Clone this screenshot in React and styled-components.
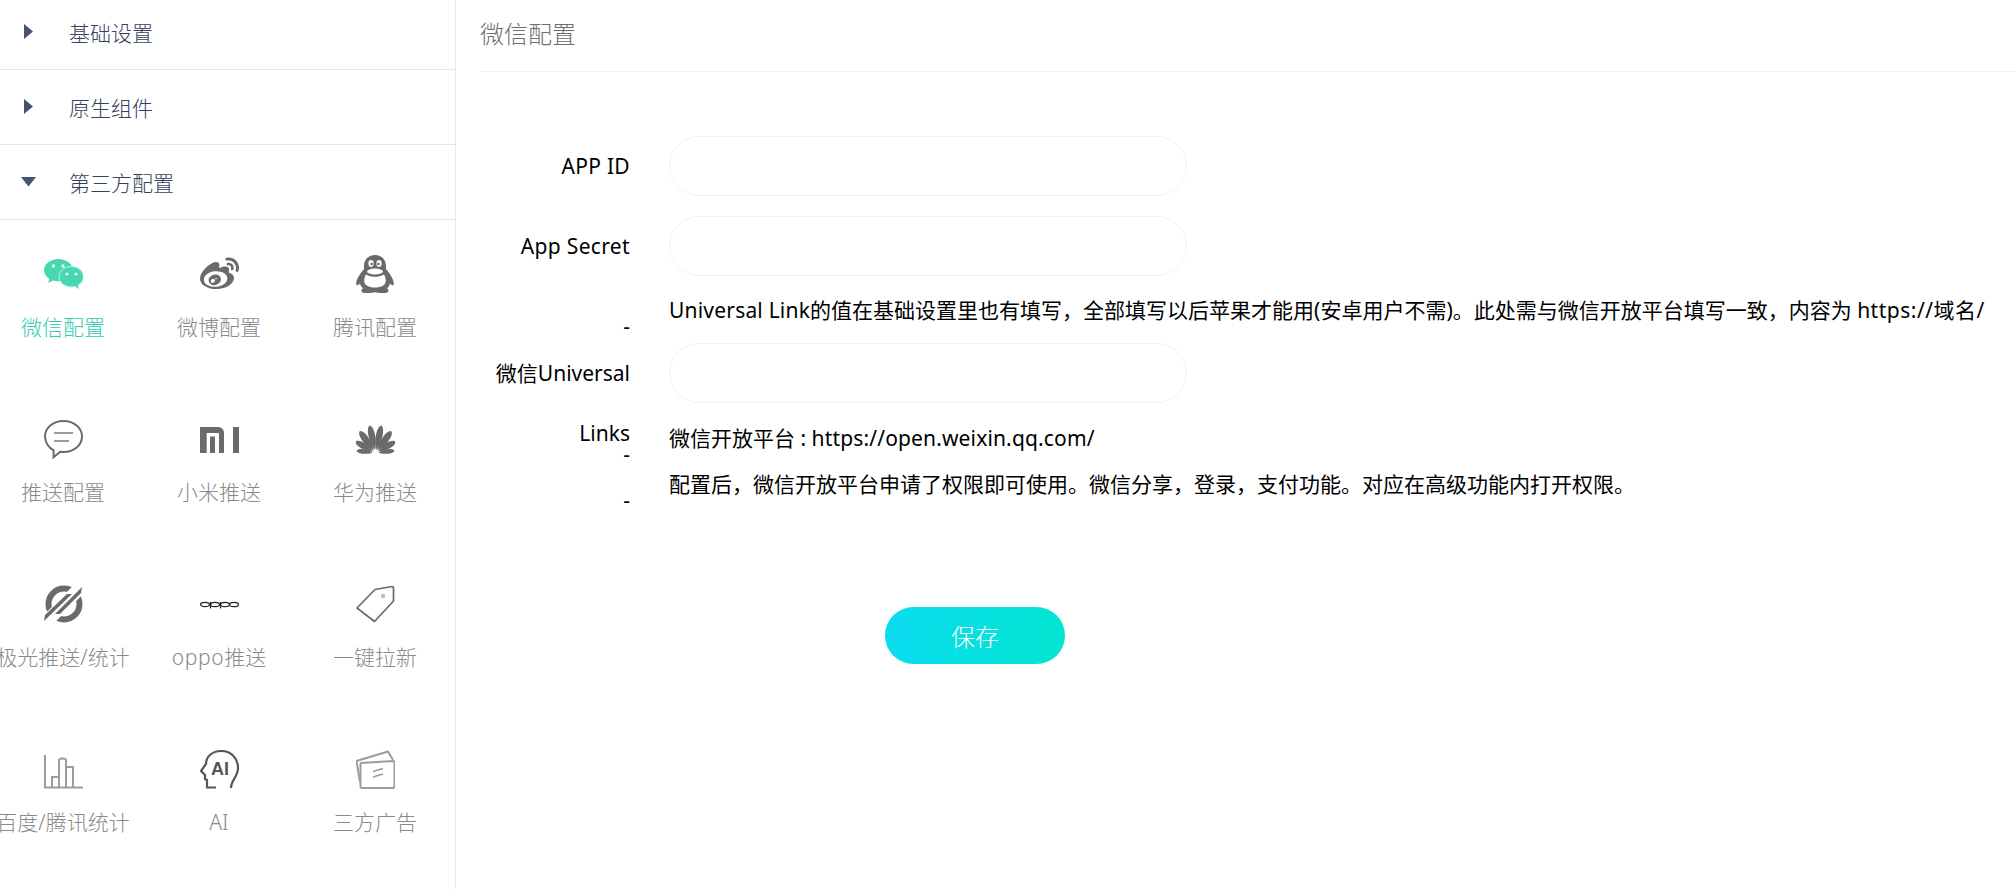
import React from "react";
import styled, { createGlobalStyle } from "styled-components";
import { FaWeibo } from "react-icons/fa";

const Global = createGlobalStyle`
  html, body { margin: 0; padding: 0; background: #fff; overflow: hidden; }
  body { font-family: "Noto Sans", "Noto Sans CJK SC", sans-serif; }
  * { box-sizing: border-box; }
`;

const Page = styled.div`
  display: flex;
  height: 894px;
  margin-top: -5px;
  overflow: hidden;
`;
const Sidebar = styled.aside`
  flex: 0 0 456px;
  width: 456px;
  border-right: 1px solid #e8e8e8;
  overflow: hidden;
`;
const SectionRow = styled.div`
  display: flex;
  align-items: center;
  height: 75px;
  padding-bottom: 1px;
  border-bottom: 1px solid #e6e6e6;
  font-size: 21px;
  font-weight: 300;
  color: #34405e;
`;
const Caret = styled.span`
  flex: 0 0 69px;
  display: flex;
  padding-left: ${(p) => (p.$open ? "21px" : "24px")};
`;
const Grid = styled.div`
  display: grid;
  grid-template-columns: repeat(3, 156px);
  grid-auto-rows: 165px;
  margin-left: -15px;
`;
const Cell = styled.div`
  display: flex;
  flex-direction: column;
  align-items: center;
  padding-top: 35px;
  color: ${(p) => (p.$active ? "#35ccb2" : "#8a8a8a")};
`;
const IconBox = styled.div`
  width: 39px;
  height: 39px;
  display: flex;
  align-items: center;
  justify-content: center;
`;
const CellLabel = styled.div`
  margin-top: 18px;
  font-size: 21px;
  font-weight: 300;
  line-height: 30px;
  white-space: nowrap;
`;
const Main = styled.main`
  flex: 1;
  min-width: 0;
  padding-left: 24px;
`;
const Header = styled.header`
  height: 77px;
  display: flex;
  align-items: center;
  padding-bottom: 2px;
  border-bottom: 1px solid #f2f2f2;
  font-size: 24px;
  font-weight: 300;
  color: #6e6e6e;
`;
const Form = styled.form`
  padding-top: 64px;
  font-size: 21px;
  color: #000;
`;
const Row = styled.div`
  display: flex;
  gap: 39px;
  margin-bottom: ${(p) => p.$gap}px;
`;
const Label = styled.label`
  flex: 0 0 150px;
  height: 60px;
  line-height: 60px;
  text-align: right;
`;
const Field = styled.input`
  width: 518px;
  height: 60px;
  border: 1px solid #f1f1f1;
  border-radius: 30px;
  outline: none;
  background: #fff;
`;
const Dash = styled.div`
  flex: 0 0 150px;
  height: 34px;
  line-height: 34px;
  padding-top: 16px;
  text-align: right;
`;
const Help = styled.p`
  margin: 0;
  height: 34px;
  line-height: 34px;
  white-space: nowrap;
`;
const Latin = styled.span`
  letter-spacing: ${(p) => p.$ls}px;
`;
const SaveButton = styled.button`
  display: block;
  width: 180px;
  height: 57px;
  margin-left: 405px;
  border: 0;
  border-radius: 29px;
  background: linear-gradient(105deg, #0cdbf2, #02e6cf);
  color: #fff;
  font: 300 24px "Noto Sans", "Noto Sans CJK SC", sans-serif;
`;

const Tri = ({ open }) =>
  open ? (
    <svg width="15" height="10" viewBox="0 0 15 10"><path d="M0 0H15L7.5 9.5Z" fill="#455270" /></svg>
  ) : (
    <svg width="10" height="15" viewBox="0 0 10 15"><path d="M0 0L9 7.5L0 15Z" fill="#455270" /></svg>
  );

const G = "#6a6a6a";
const L = "#9c9c9c";
const Svg = ({ children }) => <svg width="39" height="39" viewBox="0 0 39 39">{children}</svg>;

const Wechat = () => (
  <Svg>
    <path d="M14.5 4C6.5 4 0 9 0 15.2c0 3.5 2 6.5 5.2 8.6L4.2 28l5-2.6c1.7.5 3.4.8 5.3.8 8 0 14.5-5 14.5-11S22.5 4 14.5 4Z" fill="#47d7b1" />
    <path d="M27.5 11.5C20.6 11.5 15 16 15 21.8s5.6 10.2 12.5 10.2c1.3 0 2.5-.2 3.7-.5l3.6 3.2-.6-4.6c3.2-1.9 5.3-4.9 5.3-8.3 0-5.8-5.1-10.3-12-10.3Z" fill="#47d7b1" stroke="#c9f3e7" strokeWidth="1" />
    <circle cx="9.5" cy="11" r="1.7" fill="#dff8f0" />
    <circle cx="19" cy="11" r="1.7" fill="#dff8f0" />
    <circle cx="23" cy="19" r="1.6" fill="#dff8f0" />
    <circle cx="32" cy="19" r="1.6" fill="#dff8f0" />
  </Svg>
);
const QQ = () => (
  <Svg>
    <path d="M19 0c7 0 11 5 11 11v3c3 3.500 7.500 9.500 7.800 14 .2 3-1.500 3-3.800.5-.5 2-1.500 3.500-3 5 2.500 1 2 4.500-2 4.500h-4c-2 0-4-.8-6-.8s-4 .8-6 .8H9c-4 0-4.500-3.500-2-4.500-1.500-1.500-2.500-3-3-5-2.300 2.500-4 2.500-3.800-.5C.5 23.500 5 17.500 8 14v-3C8 5 12 0 19 0Z" fill={G} />
    <path d="M10 19.500c3 1.500 5.500 2.300 9 2.300s6-.8 9-2.300c1.300 2 1.800 4.500 1.800 6.500 0 4-4.300 6.500-10.800 6.500S8.200 30 8.200 26c0-2 .5-4.500 1.800-6.500Z" fill="#fff" />
    <ellipse cx="19" cy="16.500" rx="8" ry="3" fill="#fff" />
    <ellipse cx="15" cy="8.500" rx="2.600" ry="3.400" fill="#fff" />
    <ellipse cx="23" cy="8.500" rx="2.600" ry="3.400" fill="#fff" />
    <circle cx="15.600" cy="9" r="1.300" fill={G} />
    <circle cx="22.400" cy="9" r="1.300" fill={G} />
  </Svg>
);
const Bubble = () => (
  <Svg>
    <path d="M19.500 1C9 1 1 7.800 1 16.500c0 6.300 4.200 11.600 8.700 13.800l-.2 7 6.800-5.500c1 .1 2.100.2 3.200.2C30 32 38 25.200 38 16.500S30 1 19.500 1Z" fill="none" stroke={G} strokeWidth="2" />
    <rect x="10" y="12" width="19" height="2" fill={L} />
    <rect x="10" y="20" width="15" height="2" fill={L} />
  </Svg>
);
const Mi = () => (
  <Svg>
    <path d="M0 7H18C21.500 7 24 9.500 24 13V33H19V14C19 13.300 18.500 13 18 13H6.700V33H0ZM10 16.500H15V33H10ZM33 7H39V33H33Z" fill={G} />
  </Svg>
);
const Petal = ({ a, len, w }) => (
  <path
    transform={`rotate(${a} 19.5 33)`}
    d={`M19.500 30C${19.5 - w} ${30 - len * 0.45} ${19.5 - w * 0.75} ${30 - len * 0.95} 19.500 ${30 - len}C${19.5 + w * 0.75} ${30 - len * 0.95} ${19.5 + w} ${30 - len * 0.45} 19.500 30Z`}
    fill={G}
  />
);
const Huawei = () => (
  <Svg>
    {[[-12, 25, 5], [12, 25, 5], [-36, 24, 5.2], [36, 24, 5.2], [-60, 20, 4.8], [60, 20, 4.8], [-83, 16, 3.4], [83, 16, 3.4]].map(([a, l, w]) => (
      <Petal key={a} a={a} len={l} w={w} />
    ))}
  </Svg>
);
const Jiguang = () => (
  <Svg>
    <circle cx="20" cy="19" r="15.500" fill="none" stroke={G} strokeWidth="6" />
    <path d="M0 39L39 0" stroke="#fff" strokeWidth="13" />
    <path d="M0 36L1 30L23 9H28ZM38 2L37 8L16 29H11Z" fill={G} />
  </Svg>
);
const Oppo = () => (
  <Svg>
    <g fill="none" stroke="#222" strokeWidth="1.200">
      <ellipse cx="5" cy="19.500" rx="4.500" ry="2.200" />
      <ellipse cx="15" cy="19.500" rx="4.500" ry="2.200" />
      <ellipse cx="25" cy="19.500" rx="4.500" ry="2.200" />
      <ellipse cx="34" cy="19.500" rx="4.500" ry="2.200" />
      <path d="M10.500 17V23.500M20.500 17V23.500" />
    </g>
  </Svg>
);
const Tag = () => (
  <Svg>
    <path d="M19 4.500L36 1.500C37 1.500 37.500 2 37.500 3V16L18.500 36.500L1 23Z" fill="none" stroke={G} strokeWidth="1.700" strokeLinejoin="round" />
    <circle cx="27" cy="11" r="2.200" fill="#bdbdbd" />
  </Svg>
);
const Stats = () => (
  <Svg>
    <path d="M1 5V37.500H39M8 37V27H15M15 37V10C15 8 22 8 22 10V37M22 17H29V37" fill="none" stroke={L} strokeWidth="2" />
  </Svg>
);
const AIHead = () => (
  <Svg>
    <path d="M16 37.500H7V30L5 29V25L1 21L6 14C6 6 13 1 21 1C31 1 38 8 38 18C38 27 31 30 31 38" fill="none" stroke="#555" strokeWidth="2.200" />
    <text x="11" y="25" fontFamily="'Liberation Sans', sans-serif" fontSize="18" fontWeight="700" fill="#555">AI</text>
  </Svg>
);
const Cards = () => (
  <Svg>
    <path d="M4 32L0.500 11L32 1.500L37 10" fill="none" stroke={L} strokeWidth="2" strokeLinejoin="round" />
    <path d="M5 13L37 11C38 11 38.500 11.500 38.500 12.500V36C38.500 37 38 38 37 38H6C5 38 4.500 37 4.500 36V14Z" fill="#fff" stroke={L} strokeWidth="2" strokeLinejoin="round" />
    <path d="M17 21.500L27 18.500M17 27L27 24" stroke={L} strokeWidth="1.700" />
  </Svg>
);

const items = [
  ["微信配置", <Wechat />, true],
  ["微博配置", <FaWeibo size={39} color={G} />],
  ["腾讯配置", <QQ />],
  ["推送配置", <Bubble />],
  ["小米推送", <Mi />],
  ["华为推送", <Huawei />],
  ["极光推送/统计", <Jiguang />],
  [<><Latin $ls={0.6}>oppo</Latin>推送</>, <Oppo />],
  ["一键拉新", <Tag />],
  ["百度/腾讯统计", <Stats />],
  ["AI", <AIHead />],
  ["三方广告", <Cards />],
];

export default function App() {
  return (
    <Page>
      <Global />
      <Sidebar>
        <SectionRow><Caret><Tri /></Caret>基础设置</SectionRow>
        <SectionRow><Caret><Tri /></Caret>原生组件</SectionRow>
        <SectionRow><Caret $open><Tri open /></Caret>第三方配置</SectionRow>
        <Grid>
          {items.map(([label, icon, active], i) => (
            <Cell key={i} $active={active}>
              <IconBox>{icon}</IconBox>
              <CellLabel>{label}</CellLabel>
            </Cell>
          ))}
        </Grid>
      </Sidebar>
      <Main>
        <Header>微信配置</Header>
        <Form>
          <Row $gap={20}><Label><Latin $ls={0.3}>APP ID</Latin></Label><Field /></Row>
          <Row $gap={17}><Label><Latin $ls={0.35}>App Secret</Latin></Label><Field /></Row>
          <Row $gap={16}>
            <Dash>-</Dash>
            <Help><Latin $ls={0.2}>Universal Link</Latin>的值在基础设置里也有填写，全部填写以后苹果才能用(安卓用户不需)。此处需与微信开放平台填写一致，内容为 <Latin $ls={0.5}>https://域名/</Latin></Help>
          </Row>
          <Row $gap={18}><Label>微信Universal Links</Label><Field /></Row>
          <Row $gap={12}>
            <Dash>-</Dash>
            <Help>微信开放平台 : <Latin $ls={0.15}>https://open.weixin.qq.com/</Latin></Help>
          </Row>
          <Row $gap={106}>
            <Dash>-</Dash>
            <Help>配置后，微信开放平台申请了权限即可使用。微信分享，登录，支付功能。对应在高级功能内打开权限。</Help>
          </Row>
          <SaveButton type="button">保存</SaveButton>
        </Form>
      </Main>
    </Page>
  );
}
